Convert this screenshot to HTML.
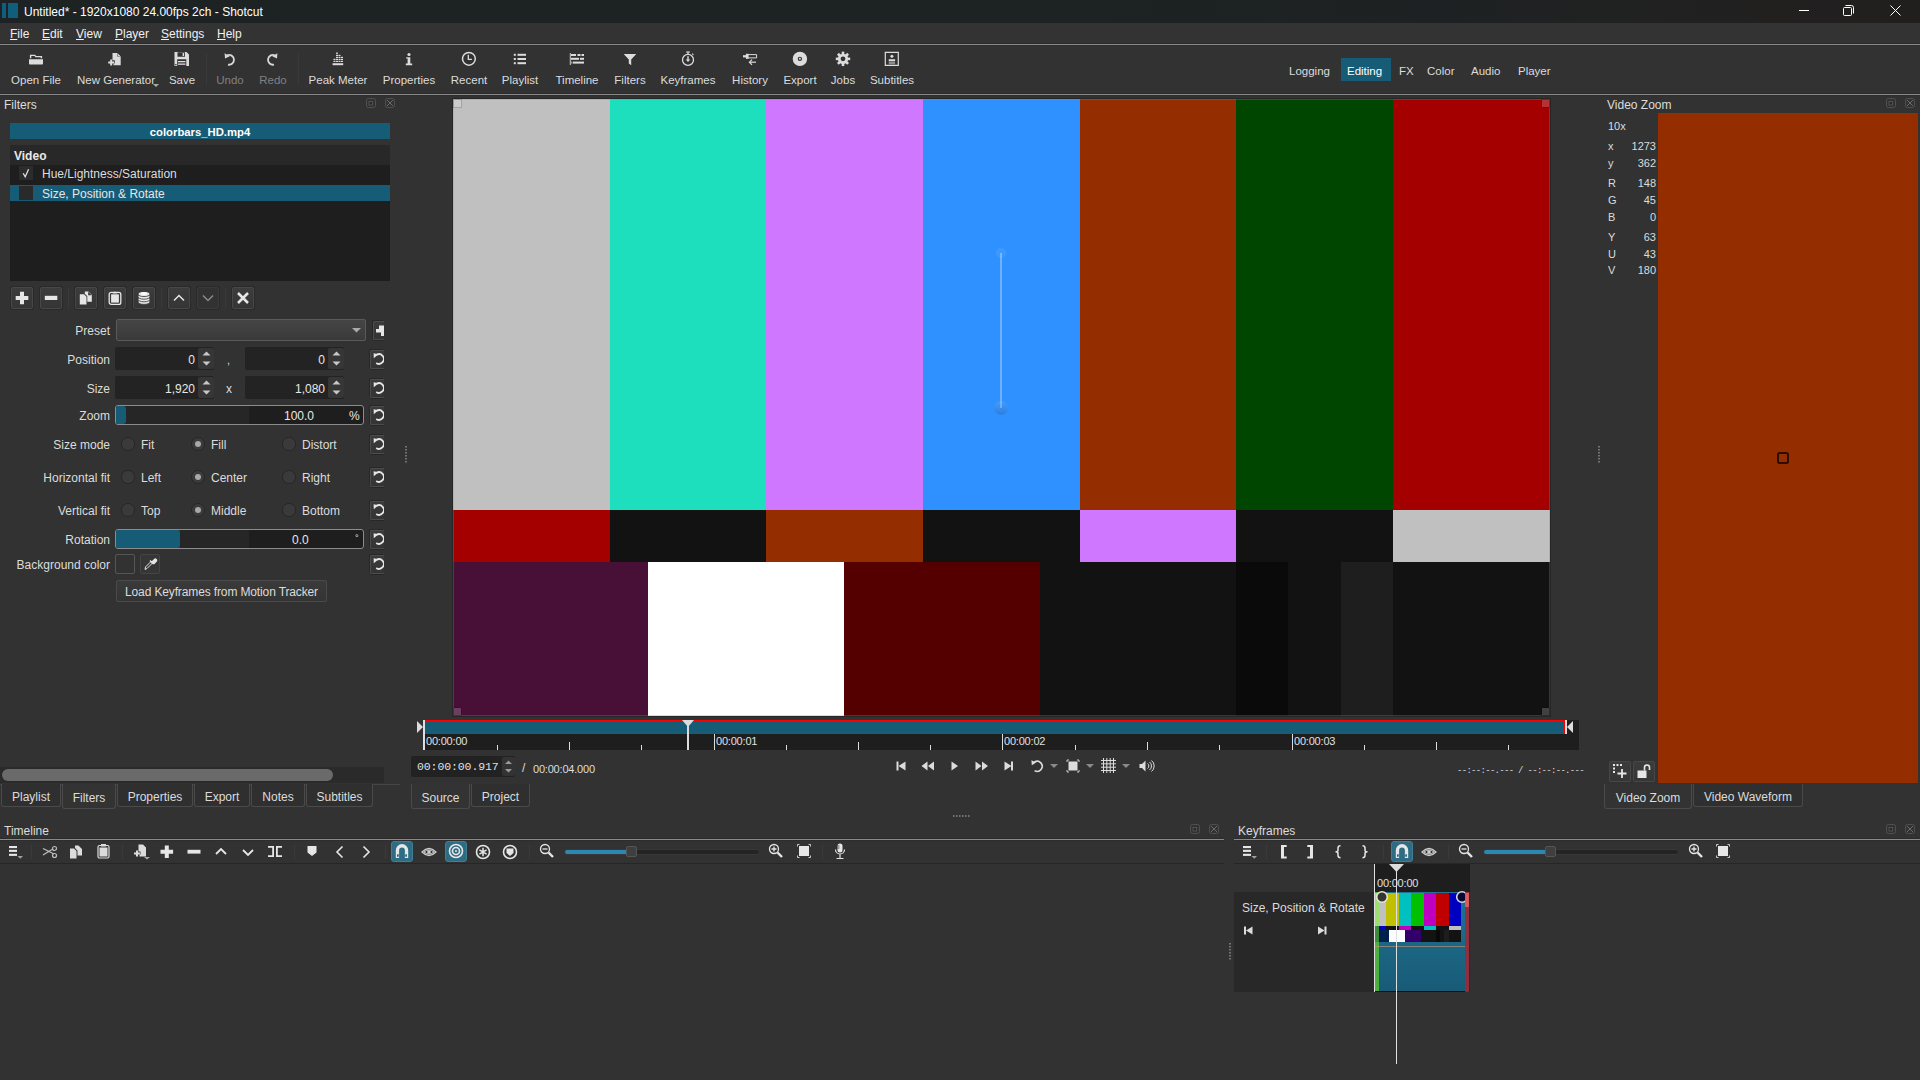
<!DOCTYPE html>
<html><head><meta charset="utf-8">
<style>
*{box-sizing:border-box}
html,body{margin:0;padding:0}
body{width:1920px;height:1080px;overflow:hidden;position:relative;background:#323232;font-family:"Liberation Sans",sans-serif;font-size:12px;color:#dcdcdc}
.a{position:absolute}
.t{position:absolute;white-space:pre;line-height:14px}
svg{position:absolute;overflow:visible}
.sep{position:absolute;width:1px;background:#444}
.hl{background:#175c76}
.btn{position:absolute;border:1px solid #3e3e3e;border-radius:2px;background:linear-gradient(#383838,#323232)}
.rst{position:absolute;border:1px solid #3e3e3e;border-radius:2px;background:#323232}
.spin{position:absolute;background:#262626;border-radius:2px}
.radio{position:absolute;width:14px;height:14px;border-radius:50%;border:1px solid #262626;background:#3a3a3a;box-shadow:inset 0 0 0 1px #3e3e3e}
.tab{position:absolute;border:1px solid #4a4a4a;border-top:none;border-radius:0 0 3px 3px;background:#2f2f2f;text-align:center;line-height:27px}
.fbtn{position:absolute;top:287px;width:22px;height:22px;border:1px solid #474747;border-radius:2px;background:linear-gradient(#3c3c3c,#353535);box-shadow:0 0 0 1px #2a2a2a}
.spinbox{position:absolute;width:99px;height:23px;background:#232323;border-radius:2px}
.spinbox span{position:absolute;right:19px;top:6px;line-height:14px;color:#e8e8e8}
.spinbox:after{content:"";position:absolute;right:0;top:1px;width:16px;height:21px;background:#363636;border-radius:2px}
.radio i{position:absolute;left:3px;top:3px;width:6px;height:6px;border-radius:50%;background:#a8a8a8}
.rbtn{position:absolute;left:370px;width:14px;height:19px;border:1px solid #4c4c4c;border-right:none;border-radius:2px 0 0 2px;background:linear-gradient(#3b3b3b,#343434);box-shadow:-1px -1px 0 #272727,0 1px 0 #272727}
.zl{position:absolute;left:1608px;width:48px;height:14px;font-size:11px;line-height:14px}
.zl b{position:absolute;left:0;font-weight:normal}
.zl span{position:absolute;right:0}
</style></head><body>

<!-- ===== Title bar ===== -->
<div class="a" style="left:0;top:0;width:1920px;height:23px;background:linear-gradient(90deg,#1e2224 0,#1c2322 300px,#1c2322 1100px,#1e2123 1450px,#212121 1650px,#211f1e 1920px)"></div>
<div class="a" style="left:2px;top:3px;width:4px;height:15px;background:#0f5f7c"></div>
<div class="a" style="left:8px;top:3px;width:10px;height:15px;background:#0f5f7c"></div>
<div class="t" style="left:24px;top:5px;color:#fff">Untitled* - 1920x1080 24.00fps 2ch - Shotcut</div>
<div class="a" style="left:1799px;top:10px;width:10px;height:1px;background:#fff"></div>
<svg style="left:1843px;top:5px" width="12" height="11"><rect x="0.5" y="2.5" width="8" height="8" rx="1" fill="none" stroke="#fff"/><path d="M2.5 0.5h6a2 2 0 0 1 2 2v6" fill="none" stroke="#fff"/></svg>
<svg style="left:1890px;top:5px" width="11" height="11"><path d="M0.5 0.5L10.5 10.5M10.5 0.5L0.5 10.5" stroke="#fff" stroke-width="1"/></svg>

<!-- ===== Menu bar ===== -->
<div class="a" style="left:0;top:23px;width:1920px;height:21px;background:#333"></div>
<div class="t" style="left:10px;top:27px;color:#f0f0f0"><u>F</u>ile</div>
<div class="t" style="left:42px;top:27px;color:#f0f0f0"><u>E</u>dit</div>
<div class="t" style="left:76px;top:27px;color:#f0f0f0"><u>V</u>iew</div>
<div class="t" style="left:115px;top:27px;color:#f0f0f0"><u>P</u>layer</div>
<div class="t" style="left:161px;top:27px;color:#f0f0f0"><u>S</u>ettings</div>
<div class="t" style="left:217px;top:27px;color:#f0f0f0"><u>H</u>elp</div>
<div class="a" style="left:0;top:43px;width:1920px;height:3px;background:linear-gradient(#2b2b2b 0,#2b2b2b 1px,#8a8a8a 1px,#8a8a8a 2px,#2d2d2d 2px)"></div>

<!-- ===== Main toolbar ===== -->
<div class="a" style="left:0;top:46px;width:1920px;height:47px;background:#323232"></div>
<div class="a" style="left:0;top:93px;width:1920px;height:3px;background:linear-gradient(#2b2b2b 0,#2b2b2b 1px,#8a8a8a 1px,#8a8a8a 2px,#2d2d2d 2px)"></div>
<!-- toolbar icons -->
<svg style="left:28px;top:51px" width="16" height="16" fill="#dcdcdc"><path d="M2.6 7.2V4.4h4.2l1 1.2h5.6v1.6" fill="none" stroke="#dcdcdc" stroke-width="1.4"/><path d="M1 8.2h14v4.3a1 1 0 0 1-1 1H2a1 1 0 0 1-1-1z"/></svg>
<svg style="left:107px;top:51px" width="16" height="16" fill="#dcdcdc"><path d="M5.5 2h4.7l3.5 3.5V14.2H6.5V12.5H7.8V9.3H5.5z"/><path d="M10.2 2v3.5h3.5" fill="#323232"/><path d="M10.6 2.3l2.9 2.9h-2.9z"/><path d="M3.2 8.6h2v2h2v2h-2v2h-2v-2h-2v-2h2z"/></svg>
<svg style="left:174px;top:51px" width="16" height="16" fill="#dcdcdc"><path fill-rule="evenodd" d="M0.5 1h12l2.5 2.5V15H0.5z M3.5 1.2h7.5V5.8H3.5z M3.2 8.2h9.1V15H3.2z"/><rect x="8.6" y="2" width="1.5" height="3"/><rect x="4" y="10" width="7.5" height="1.3"/><rect x="4" y="12.5" width="7.5" height="1.3"/><rect x="1.2" y="13" width="1.3" height="1.3" fill="#323232"/></svg>
<svg style="left:222px;top:51px" width="16" height="16"><path d="M5.2 4.3A4.9 4.9 0 1 1 6 13.6" fill="none" stroke="#d8d8d8" stroke-width="1.8"/><path d="M2.6 2.2L3 7.6L7.8 5.2z" fill="#d8d8d8"/></svg>
<svg style="left:264px;top:51px" width="16" height="16"><path d="M10.8 4.3A4.9 4.9 0 1 0 10 13.6" fill="none" stroke="#d8d8d8" stroke-width="1.8"/><path d="M13.4 2.2L13 7.6L8.2 5.2z" fill="#d8d8d8"/></svg>
<svg style="left:330px;top:51px" width="16" height="16" fill="#dcdcdc"><rect x="2.6" y="12.2" width="10.6" height="2"/><g><rect x="3.5" y="9.8" width="2" height="1.2"/><rect x="3.5" y="7.8" width="2" height="1.2"/><rect x="6" y="9.8" width="2" height="1.2"/><rect x="6" y="7.8" width="2" height="1.2"/><rect x="6" y="5.8" width="2" height="1.2"/><rect x="6" y="3.8" width="2" height="1.2"/><rect x="6" y="1.6" width="2" height="1.2"/><rect x="8.5" y="9.8" width="2" height="1.2"/><rect x="8.5" y="7.8" width="2" height="1.2"/><rect x="8.5" y="5.8" width="2" height="1.2"/><rect x="8.5" y="3.8" width="2" height="1.2"/><rect x="11" y="9.8" width="2" height="1.2"/><rect x="11" y="7.8" width="2" height="1.2"/><rect x="11" y="5.8" width="2" height="1.2"/></g></svg>
<svg style="left:401px;top:51px" width="16" height="16" fill="#dcdcdc"><circle cx="8" cy="3.5" r="1.6"/><path d="M5.2 6.2h4.1v6.3h1.9v1.7H4.8v-1.7h1.8V7.6H5.2z"/></svg>
<svg style="left:461px;top:51px" width="16" height="16"><circle cx="7.9" cy="7.8" r="6.4" fill="none" stroke="#dcdcdc" stroke-width="1.5"/><path d="M7.3 3.8v4.5h3.6" fill="none" stroke="#dcdcdc" stroke-width="1.3"/></svg>
<svg style="left:512px;top:51px" width="16" height="16" fill="#dcdcdc"><rect x="1.8" y="2.8" width="2" height="2"/><rect x="1.8" y="7" width="2" height="2"/><rect x="1.8" y="11.2" width="2" height="2"/><rect x="5.5" y="2.8" width="8.5" height="2"/><rect x="5.5" y="7" width="8.5" height="2"/><rect x="5.5" y="11.2" width="8.5" height="2"/></svg>
<svg style="left:569px;top:51px" width="16" height="16" fill="#dcdcdc"><rect x="0.8" y="2" width="0.9" height="12"/><rect x="2" y="3" width="5" height="2"/><rect x="8.5" y="3" width="3" height="2"/><rect x="12.5" y="3" width="2.5" height="2"/><rect x="2" y="6.8" width="8" height="2"/><rect x="11" y="6.8" width="4" height="2"/><rect x="2" y="10.6" width="1.5" height="2" fill="#9a9a9a"/><rect x="4" y="10.6" width="11" height="2"/></svg>
<svg style="left:622px;top:51px" width="16" height="16" fill="#dcdcdc"><path d="M1.7 3h12.6L9.2 8.6V14.2L6.8 12.4V8.6z"/></svg>
<svg style="left:680px;top:51px" width="16" height="16"><circle cx="8" cy="8.9" r="5.5" fill="none" stroke="#dcdcdc" stroke-width="1.3"/><rect x="6.3" y="0.4" width="3.4" height="1.3" fill="#dcdcdc"/><rect x="7.4" y="1.5" width="1.2" height="2" fill="#dcdcdc"/><path d="M12.2 2.6l1.2 1.2" stroke="#dcdcdc" stroke-width="1.2"/><path d="M7.3 5.2h1.4v3.3h1.6L8 11 5.7 8.5h1.6z" fill="#dcdcdc"/></svg>
<svg style="left:742px;top:51px" width="16" height="16" fill="#dcdcdc"><rect x="1" y="4.2" width="3" height="2.2"/><path d="M4.2 3.6h10.4v3.3H4.2z" fill="none" stroke="#dcdcdc" stroke-width="1"/><rect x="4" y="2.8" width="2.6" height="5"/><path d="M8 11.2h6" stroke="#dcdcdc" stroke-width="1.2"/><path d="M10 8.6L7.4 11.2L10 13.8" fill="none" stroke="#dcdcdc" stroke-width="1.2"/></svg>
<svg style="left:792px;top:51px" width="16" height="16"><circle cx="7.9" cy="7.85" r="7.2" fill="#dcdcdc"/><circle cx="7.9" cy="7.85" r="1.6" fill="none" stroke="#323232" stroke-width="1.2"/></svg>
<svg style="left:835px;top:51px" width="16" height="16"><g fill="#dcdcdc" transform="translate(8 7.85)"><circle r="5.2"/><rect x="-1.3" y="-7.2" width="2.6" height="14.4"/><rect x="-1.3" y="-7.2" width="2.6" height="14.4" transform="rotate(45)"/><rect x="-1.3" y="-7.2" width="2.6" height="14.4" transform="rotate(90)"/><rect x="-1.3" y="-7.2" width="2.6" height="14.4" transform="rotate(135)"/><circle r="2.4" fill="#323232"/></g></svg>
<svg style="left:884px;top:51px" width="16" height="16" fill="#dcdcdc"><path d="M1.3 1.3h13v13h-13z" fill="none" stroke="#dcdcdc" stroke-width="1.2"/><circle cx="7.9" cy="5.3" r="1.5"/><path d="M4.7 8.2h6.4v2H4.7z"/><path d="M4.7 10.8h6.4v0.9H4.7zM4.7 12.3h6.4v0.9H4.7z" fill="#aaa"/></svg>
<!-- separators -->
<div class="sep" style="left:206px;top:54px;height:31px;background:#3a3a3a"></div>
<div class="sep" style="left:298px;top:54px;height:31px;background:#3a3a3a"></div>
<!-- toolbar text -->
<div class="t" style="left:-14px;top:73px;width:100px;text-align:center;font-size:11.5px">Open File</div>
<div class="t" style="left:66px;top:73px;width:100px;text-align:center;font-size:11.5px">New Generator</div>
<svg style="left:153px;top:84px" width="6" height="4"><path d="M0 0h6L3 3z" fill="#aaa"/></svg>
<div class="t" style="left:132px;top:73px;width:100px;text-align:center;font-size:11.5px">Save</div>
<div class="t" style="left:180px;top:73px;width:100px;text-align:center;font-size:11.5px;color:#808080">Undo</div>
<div class="t" style="left:223px;top:73px;width:100px;text-align:center;font-size:11.5px;color:#808080">Redo</div>
<div class="t" style="left:288px;top:73px;width:100px;text-align:center;font-size:11.5px">Peak Meter</div>
<div class="t" style="left:359px;top:73px;width:100px;text-align:center;font-size:11.5px">Properties</div>
<div class="t" style="left:419px;top:73px;width:100px;text-align:center;font-size:11.5px">Recent</div>
<div class="t" style="left:470px;top:73px;width:100px;text-align:center;font-size:11.5px">Playlist</div>
<div class="t" style="left:527px;top:73px;width:100px;text-align:center;font-size:11.5px">Timeline</div>
<div class="t" style="left:580px;top:73px;width:100px;text-align:center;font-size:11.5px">Filters</div>
<div class="t" style="left:638px;top:73px;width:100px;text-align:center;font-size:11.5px">Keyframes</div>
<div class="t" style="left:700px;top:73px;width:100px;text-align:center;font-size:11.5px">History</div>
<div class="t" style="left:750px;top:73px;width:100px;text-align:center;font-size:11.5px">Export</div>
<div class="t" style="left:793px;top:73px;width:100px;text-align:center;font-size:11.5px">Jobs</div>
<div class="t" style="left:842px;top:73px;width:100px;text-align:center;font-size:11.5px">Subtitles</div>
<!-- layout switcher -->
<div class="a hl" style="left:1341px;top:58px;width:50px;height:23px"></div>
<div class="t" style="left:1289px;top:64px;font-size:11.5px">Logging</div>
<div class="t" style="left:1347px;top:64px;font-size:11.5px;color:#fff">Editing</div>
<div class="t" style="left:1399px;top:64px;font-size:11.5px">FX</div>
<div class="t" style="left:1427px;top:64px;font-size:11.5px">Color</div>
<div class="t" style="left:1471px;top:64px;font-size:11.5px">Audio</div>
<div class="t" style="left:1518px;top:64px;font-size:11.5px">Player</div>


<!-- dock title -->
<div class="t" style="left:4px;top:98px">Filters</div>
<svg style="left:366px;top:98px" width="10" height="10"><rect x="0.5" y="0.5" width="9" height="9" rx="2" fill="none" stroke="#505050"/><rect x="3" y="3.5" width="3.5" height="3.5" fill="#2a2a2a" stroke="#5a5a5a" stroke-width="0.8"/></svg>
<svg style="left:385px;top:98px" width="10" height="10"><rect x="0.5" y="0.5" width="9" height="9" rx="2" fill="none" stroke="#505050"/><path d="M2 2L8 8M8 2L2 8" stroke="#6a6a6a" stroke-width="1"/></svg>
<!-- clip header -->
<div class="a hl" style="left:10px;top:123px;width:380px;height:16px"></div>
<div class="t" style="left:10px;top:125px;width:380px;text-align:center;font-weight:bold;font-size:11.3px;color:#fff">colorbars_HD.mp4</div>
<!-- list -->
<div class="a" style="left:10px;top:145px;width:380px;height:136px;background:#1e1e1e"></div>
<div class="a" style="left:10px;top:145px;width:380px;height:20px;background:#282828"></div>
<div class="t" style="left:14px;top:149px;font-weight:bold;color:#e8e8e8">Video</div>
<div class="a" style="left:19px;top:166px;width:14px;height:14px;background:#2c2c2c"></div>
<svg style="left:19px;top:166px" width="14" height="14"><path d="M4.2 7.2L6.2 10.8L9.6 3.2" fill="none" stroke="#dcdcdc" stroke-width="1.3"/></svg>
<div class="t" style="left:42px;top:167px">Hue/Lightness/Saturation</div>
<div class="a hl" style="left:10px;top:185px;width:380px;height:16px"></div>
<div class="a" style="left:19px;top:186px;width:14px;height:14px;background:#2a2a2a"></div>
<div class="t" style="left:42px;top:187px;color:#e6e6e6">Size, Position &amp; Rotate</div>
<!-- buttons -->
<div class="fbtn" style="left:11px"></div>
<svg style="left:15px;top:291px" width="14" height="14" fill="#e6e6e6"><path d="M5 0.7h4v4.3h4.3v4H9v4.3H5V9H0.7V5H5z"/></svg>
<div class="fbtn" style="left:40px"></div>
<svg style="left:44px;top:291px" width="14" height="14" fill="#e6e6e6"><rect x="0.8" y="4.8" width="12.5" height="4.2"/></svg>
<div class="sep" style="left:68px;top:288px;height:20px;background:#3a3a3a"></div>
<div class="fbtn" style="left:75px"></div>
<svg style="left:79px;top:291px" width="14" height="14" fill="#e6e6e6"><path d="M0.8 3.2h4.2l2.5 2.5V13.5H0.8z"/><path d="M5.8 0.6h3.6l3.4 3.4V10.8H8.3V5.2L5.8 2.8z"/><path d="M9.2 0.8v3.4h3.4" fill="#323232"/></svg>
<div class="fbtn" style="left:104px"></div>
<svg style="left:108px;top:291px" width="14" height="14"><rect x="1.2" y="1.4" width="11.6" height="12" rx="2" fill="none" stroke="#e6e6e6" stroke-width="1.3"/><rect x="3.1" y="3.3" width="7.8" height="8.3" fill="#e6e6e6"/><path d="M4.5 2.6L7 0.4L9.5 2.6z" fill="#e6e6e6"/></svg>
<div class="fbtn" style="left:133px"></div>
<svg style="left:137px;top:291px" width="14" height="14"><g fill="#e6e6e6" stroke="#323232" stroke-width="0.8"><ellipse cx="7" cy="10.8" rx="6" ry="2.6"/><ellipse cx="7" cy="8.2" rx="6" ry="2.6"/><ellipse cx="7" cy="5.6" rx="6" ry="2.6"/><ellipse cx="7" cy="3" rx="6" ry="2.6"/></g><ellipse cx="7" cy="2.7" rx="3" ry="1.2" fill="#fff"/></svg>
<div class="sep" style="left:161px;top:288px;height:20px;background:#3a3a3a"></div>
<div class="fbtn" style="left:168px"></div>
<svg style="left:172px;top:291px" width="14" height="14"><path d="M2 9.5L7 4.5L12 9.5" fill="none" stroke="#e6e6e6" stroke-width="1.5"/></svg>
<div class="fbtn" style="left:197px;background:#323232;border-color:#3a3a3a"></div>
<svg style="left:201px;top:291px" width="14" height="14"><path d="M2 4.5L7 9.5L12 4.5" fill="none" stroke="#8a8a8a" stroke-width="1.5"/></svg>
<div class="sep" style="left:225px;top:288px;height:20px;background:#3a3a3a"></div>
<div class="fbtn" style="left:232px"></div>
<svg style="left:236px;top:291px" width="14" height="14"><path d="M2 2L12 12M12 2L2 12" stroke="#e6e6e6" stroke-width="2.6"/></svg>
<!-- form labels -->
<div class="t" style="left:0;top:324px;width:110px;text-align:right">Preset</div>
<div class="t" style="left:0;top:353px;width:110px;text-align:right">Position</div>
<div class="t" style="left:0;top:382px;width:110px;text-align:right">Size</div>
<div class="t" style="left:0;top:409px;width:110px;text-align:right">Zoom</div>
<div class="t" style="left:0;top:438px;width:110px;text-align:right">Size mode</div>
<div class="t" style="left:0;top:471px;width:110px;text-align:right">Horizontal fit</div>
<div class="t" style="left:0;top:504px;width:110px;text-align:right">Vertical fit</div>
<div class="t" style="left:0;top:533px;width:110px;text-align:right">Rotation</div>
<div class="t" style="left:0;top:558px;width:110px;text-align:right">Background color</div>
<!-- preset combo -->
<div class="a" style="left:116px;top:319px;width:250px;height:22px;border:1px solid #5a5a5a;border-radius:2px;background:linear-gradient(#454545,#3a3a3a)"></div>
<svg style="left:352px;top:328px" width="9" height="5"><path d="M0 0h9L4.5 4.5z" fill="#aaa"/></svg>
<div class="a" style="left:373px;top:321px;width:11px;height:19px;border:1px solid #4c4c4c;border-right:none;border-radius:2px 0 0 2px;background:linear-gradient(#3b3b3b,#343434);box-shadow:-1px -1px 0 #272727,0 1px 0 #272727"></div>
<svg style="left:376px;top:324px" width="8" height="12" fill="#e6e6e6"><path d="M0 5h3V1.5h5V12H5V8.5H0z"/></svg>
<!-- spinboxes -->
<div class="spinbox" style="left:115px;top:347px"><span>0</span></div><svg style="left:202px;top:351px" width="9" height="15"><path d="M0.5 4.5L4.5 0.5L8.5 4.5z M0.5 10.5L4.5 14.5L8.5 10.5z" fill="#c8c8c8"/></svg>
<div class="spinbox" style="left:245px;top:347px"><span>0</span></div><svg style="left:332px;top:351px" width="9" height="15"><path d="M0.5 4.5L4.5 0.5L8.5 4.5z M0.5 10.5L4.5 14.5L8.5 10.5z" fill="#c8c8c8"/></svg>
<div class="t" style="left:227px;top:353px;font-size:11px">,</div>
<div class="spinbox" style="left:115px;top:376px"><span>1,920</span></div><svg style="left:202px;top:380px" width="9" height="15"><path d="M0.5 4.5L4.5 0.5L8.5 4.5z M0.5 10.5L4.5 14.5L8.5 10.5z" fill="#c8c8c8"/></svg>
<div class="spinbox" style="left:245px;top:376px"><span>1,080</span></div><svg style="left:332px;top:380px" width="9" height="15"><path d="M0.5 4.5L4.5 0.5L8.5 4.5z M0.5 10.5L4.5 14.5L8.5 10.5z" fill="#c8c8c8"/></svg>
<div class="t" style="left:226px;top:382px">x</div>
<!-- zoom slider -->
<div class="a" style="left:115px;top:405px;width:249px;height:20px;border:1px solid #8c8c8c;border-radius:3px;background:linear-gradient(90deg,#262626 0,#262626 133px,#1e1e1e 133px)"></div>
<div class="a hl" style="left:116px;top:406px;width:10px;height:18px;border-radius:2px 3px 3px 2px"></div>
<div class="t" style="left:284px;top:409px;color:#e8e8e8">100.0</div>
<div class="t" style="left:349px;top:409px;color:#e8e8e8">%</div>
<!-- radios -->
<div class="radio" style="left:121px;top:437px"></div><div class="t" style="left:141px;top:438px">Fit</div>
<div class="radio" style="left:191px;top:437px"><i></i></div><div class="t" style="left:211px;top:438px">Fill</div>
<div class="radio" style="left:282px;top:437px"></div><div class="t" style="left:302px;top:438px">Distort</div>
<div class="radio" style="left:121px;top:470px"></div><div class="t" style="left:141px;top:471px">Left</div>
<div class="radio" style="left:191px;top:470px"><i></i></div><div class="t" style="left:211px;top:471px">Center</div>
<div class="radio" style="left:282px;top:470px"></div><div class="t" style="left:302px;top:471px">Right</div>
<div class="radio" style="left:121px;top:503px"></div><div class="t" style="left:141px;top:504px">Top</div>
<div class="radio" style="left:191px;top:503px"><i></i></div><div class="t" style="left:211px;top:504px">Middle</div>
<div class="radio" style="left:282px;top:503px"></div><div class="t" style="left:302px;top:504px">Bottom</div>
<!-- rotation slider -->
<div class="a" style="left:115px;top:529px;width:249px;height:20px;border:1px solid #8c8c8c;border-radius:3px;background:linear-gradient(90deg,#262626 0,#262626 133px,#1e1e1e 133px)"></div>
<div class="a hl" style="left:116px;top:530px;width:64px;height:18px;border-radius:2px"></div>
<div class="t" style="left:292px;top:533px;color:#e8e8e8">0.0</div>
<div class="t" style="left:355px;top:531px;font-size:9px;color:#e8e8e8">°</div>
<!-- background color -->
<div class="a" style="left:115px;top:554px;width:20px;height:20px;border:1px solid #555;border-radius:2px;background:#323232"></div>
<div class="a" style="left:140px;top:554px;width:20px;height:20px;border:1px solid #444;border-radius:2px;background:#363636"></div>
<svg style="left:143px;top:557px" width="14" height="14"><path d="M2 12.5L2.5 10L8 4.5L9.5 6L4 11.5z" fill="none" stroke="#e6e6e6" stroke-width="1"/><path d="M7 3.5L10.5 7M9 5L11.5 2.5a1.2 1.2 0 0 1 1.7 1.7L10.5 7" fill="#e6e6e6" stroke="#e6e6e6" stroke-width="1.4"/></svg>
<!-- load keyframes button -->
<div class="a" style="left:116px;top:580px;width:211px;height:22px;border:1px solid #4a4a4a;border-radius:2px;background:linear-gradient(#3a3a3a,#343434)"></div>
<div class="t" style="left:116px;top:585px;width:211px;text-align:center;letter-spacing:-0.13px">Load Keyframes from Motion Tracker</div>
<!-- reset buttons -->
<div class="rbtn" style="top:350px"></div><svg style="left:373px;top:352px;overflow:hidden" width="11" height="14"><path d="M3.25 3.07A4.8 4.8 0 1 1 3.25 10.93" fill="none" stroke="#e6e6e6" stroke-width="1.8"/><path d="M0.6 1.2L0.8 6.2L5.4 2.2z" fill="#e6e6e6"/></svg>
<div class="rbtn" style="top:379px"></div><svg style="left:373px;top:381px;overflow:hidden" width="11" height="14"><path d="M3.25 3.07A4.8 4.8 0 1 1 3.25 10.93" fill="none" stroke="#e6e6e6" stroke-width="1.8"/><path d="M0.6 1.2L0.8 6.2L5.4 2.2z" fill="#e6e6e6"/></svg>
<div class="rbtn" style="top:406px"></div><svg style="left:373px;top:408px;overflow:hidden" width="11" height="14"><path d="M3.25 3.07A4.8 4.8 0 1 1 3.25 10.93" fill="none" stroke="#e6e6e6" stroke-width="1.8"/><path d="M0.6 1.2L0.8 6.2L5.4 2.2z" fill="#e6e6e6"/></svg>
<div class="rbtn" style="top:435px"></div><svg style="left:373px;top:437px;overflow:hidden" width="11" height="14"><path d="M3.25 3.07A4.8 4.8 0 1 1 3.25 10.93" fill="none" stroke="#e6e6e6" stroke-width="1.8"/><path d="M0.6 1.2L0.8 6.2L5.4 2.2z" fill="#e6e6e6"/></svg>
<div class="rbtn" style="top:468px"></div><svg style="left:373px;top:470px;overflow:hidden" width="11" height="14"><path d="M3.25 3.07A4.8 4.8 0 1 1 3.25 10.93" fill="none" stroke="#e6e6e6" stroke-width="1.8"/><path d="M0.6 1.2L0.8 6.2L5.4 2.2z" fill="#e6e6e6"/></svg>
<div class="rbtn" style="top:501px"></div><svg style="left:373px;top:503px;overflow:hidden" width="11" height="14"><path d="M3.25 3.07A4.8 4.8 0 1 1 3.25 10.93" fill="none" stroke="#e6e6e6" stroke-width="1.8"/><path d="M0.6 1.2L0.8 6.2L5.4 2.2z" fill="#e6e6e6"/></svg>
<div class="rbtn" style="top:530px"></div><svg style="left:373px;top:532px;overflow:hidden" width="11" height="14"><path d="M3.25 3.07A4.8 4.8 0 1 1 3.25 10.93" fill="none" stroke="#e6e6e6" stroke-width="1.8"/><path d="M0.6 1.2L0.8 6.2L5.4 2.2z" fill="#e6e6e6"/></svg>
<div class="rbtn" style="top:555px"></div><svg style="left:373px;top:557px;overflow:hidden" width="11" height="14"><path d="M3.25 3.07A4.8 4.8 0 1 1 3.25 10.93" fill="none" stroke="#e6e6e6" stroke-width="1.8"/><path d="M0.6 1.2L0.8 6.2L5.4 2.2z" fill="#e6e6e6"/></svg>
<!-- scrollbar -->
<div class="a" style="left:0;top:767px;width:384px;height:16px;background:#2a2a2a"></div>
<div class="a" style="left:2px;top:769px;width:331px;height:12px;border-radius:6px;background:#6a6a6a"></div>
<!-- tabs -->
<div class="a" style="left:0;top:784px;width:400px;height:1px;background:#454545"></div>
<div class="tab" style="left:1px;top:784px;width:60px;height:23px">Playlist</div>
<div class="tab" style="left:62px;top:784px;width:54px;height:25px;line-height:28px;background:#333">Filters</div>
<div class="tab" style="left:117px;top:784px;width:76px;height:23px">Properties</div>
<div class="tab" style="left:194px;top:784px;width:56px;height:23px">Export</div>
<div class="tab" style="left:251px;top:784px;width:54px;height:23px">Notes</div>
<div class="tab" style="left:306px;top:784px;width:67px;height:23px">Subtitles</div>


<!-- video frame -->
<div class="a" style="left:452px;top:98px;width:1099px;height:619px;background:#262626"></div>
<div class="a" style="left:453px;top:99px;width:1097px;height:617px;overflow:hidden">
 <div class="a" style="left:0;top:0;width:157px;height:411px;background:#c0c0c0"></div>
 <div class="a" style="left:157px;top:0;width:156px;height:411px;background:#1ddfbe"></div>
 <div class="a" style="left:313px;top:0;width:157px;height:411px;background:#cf78ff"></div>
 <div class="a" style="left:470px;top:0;width:157px;height:411px;background:#2e91ff"></div>
 <div class="a" style="left:627px;top:0;width:156px;height:411px;background:#942d00"></div>
 <div class="a" style="left:783px;top:0;width:157px;height:411px;background:#004500"></div>
 <div class="a" style="left:940px;top:0;width:157px;height:411px;background:#a50000"></div>
 <div class="a" style="left:0;top:411px;width:157px;height:52px;background:#a50000"></div>
 <div class="a" style="left:157px;top:411px;width:156px;height:52px;background:#121212"></div>
 <div class="a" style="left:313px;top:411px;width:157px;height:52px;background:#942d00"></div>
 <div class="a" style="left:470px;top:411px;width:157px;height:52px;background:#121212"></div>
 <div class="a" style="left:627px;top:411px;width:156px;height:52px;background:#cf78ff"></div>
 <div class="a" style="left:783px;top:411px;width:157px;height:52px;background:#121212"></div>
 <div class="a" style="left:940px;top:411px;width:157px;height:52px;background:#c0c0c0"></div>
 <div class="a" style="left:0;top:463px;width:195px;height:154px;background:#480f37"></div>
 <div class="a" style="left:195px;top:463px;width:196px;height:154px;background:#ffffff"></div>
 <div class="a" style="left:391px;top:463px;width:196px;height:154px;background:#540000"></div>
 <div class="a" style="left:587px;top:463px;width:196px;height:154px;background:#121212"></div>
 <div class="a" style="left:783px;top:463px;width:52px;height:154px;background:#0a0a0a"></div>
 <div class="a" style="left:835px;top:463px;width:53px;height:154px;background:#121212"></div>
 <div class="a" style="left:888px;top:463px;width:52px;height:154px;background:#1e1e1e"></div>
 <div class="a" style="left:940px;top:463px;width:157px;height:154px;background:#121212"></div>
 <!-- selection outline -->
 <div class="a" style="left:0;top:0;width:1097px;height:617px;border:1px solid rgba(140,140,140,0.3)"></div>
 <div class="a" style="left:1px;top:1px;width:7px;height:7px;background:rgba(255,255,255,0.2);box-shadow:0 0 0 1px rgba(0,0,0,0.15)"></div>
 <div class="a" style="left:1089px;top:1px;width:7px;height:7px;background:rgba(255,255,255,0.2);box-shadow:0 0 0 1px rgba(0,0,0,0.15)"></div>
 <div class="a" style="left:1px;top:609px;width:7px;height:7px;background:rgba(255,255,255,0.2);box-shadow:0 0 0 1px rgba(0,0,0,0.15)"></div>
 <div class="a" style="left:1089px;top:609px;width:7px;height:7px;background:rgba(255,255,255,0.2);box-shadow:0 0 0 1px rgba(0,0,0,0.15)"></div>
 <!-- rotation handle -->
 <div class="a" style="left:547px;top:154px;width:2px;height:155px;background:rgba(255,255,255,0.3)"></div>
 <div class="a" style="left:543px;top:149px;width:10px;height:10px;border-radius:50%;background:rgba(255,255,255,0.08)"></div>
 <div class="a" style="left:541px;top:302px;width:14px;height:14px;border-radius:50%;background:linear-gradient(rgba(255,255,255,0.1),rgba(0,0,0,0.12))"></div>
</div>
<!-- splitter dots -->
<svg style="left:405px;top:446px" width="2" height="18"><path d="M1 0v18" stroke="#8a8a8a" stroke-width="1.5" stroke-dasharray="1.5 1.5"/></svg>
<!-- scrubber ruler -->
<div class="a" style="left:424px;top:720px;width:1155px;height:30px;background:#1e1e1e"></div>
<div class="a" style="left:424px;top:720px;width:1141px;height:14px;background:#175c76;border:1px solid #ff0000;border-left-width:2px;border-right-width:2px"></div>
<div class="a" style="left:423px;top:720px;width:2px;height:30px;background:#e0e0e0"></div>
<svg style="left:416px;top:720px" width="8" height="14"><path d="M1 1L7 7L1 13z" fill="#dcdcdc"/></svg>
<div class="a" style="left:1565px;top:720px;width:2px;height:14px;background:#e0e0e0"></div>
<svg style="left:1566px;top:720px" width="8" height="14"><path d="M7 1L1 7L7 13z" fill="#dcdcdc"/></svg>
<!-- ticks -->
<div class="a" style="left:424px;top:734px;width:1px;height:16px;background:#dcdcdc"></div>
<div class="t" style="left:426px;top:734px;font-size:11px;letter-spacing:-0.2px;color:#e0e0e0">00:00:00</div>
<div class="a" style="left:497px;top:745px;width:1px;height:5px;background:#dcdcdc"></div>
<div class="a" style="left:569px;top:742px;width:1px;height:8px;background:#dcdcdc"></div>
<div class="a" style="left:641px;top:745px;width:1px;height:5px;background:#dcdcdc"></div>
<div class="a" style="left:714px;top:734px;width:1px;height:16px;background:#dcdcdc"></div>
<div class="t" style="left:716px;top:734px;font-size:11px;letter-spacing:-0.2px;color:#e0e0e0">00:00:01</div>
<div class="a" style="left:786px;top:745px;width:1px;height:5px;background:#dcdcdc"></div>
<div class="a" style="left:858px;top:742px;width:1px;height:8px;background:#dcdcdc"></div>
<div class="a" style="left:930px;top:745px;width:1px;height:5px;background:#dcdcdc"></div>
<div class="a" style="left:1002px;top:734px;width:1px;height:16px;background:#dcdcdc"></div>
<div class="t" style="left:1004px;top:734px;font-size:11px;letter-spacing:-0.2px;color:#e0e0e0">00:00:02</div>
<div class="a" style="left:1075px;top:745px;width:1px;height:5px;background:#dcdcdc"></div>
<div class="a" style="left:1147px;top:742px;width:1px;height:8px;background:#dcdcdc"></div>
<div class="a" style="left:1219px;top:745px;width:1px;height:5px;background:#dcdcdc"></div>
<div class="a" style="left:1292px;top:734px;width:1px;height:16px;background:#dcdcdc"></div>
<div class="t" style="left:1294px;top:734px;font-size:11px;letter-spacing:-0.2px;color:#e0e0e0">00:00:03</div>
<div class="a" style="left:1364px;top:745px;width:1px;height:5px;background:#dcdcdc"></div>
<div class="a" style="left:1436px;top:742px;width:1px;height:8px;background:#dcdcdc"></div>
<div class="a" style="left:1508px;top:745px;width:1px;height:5px;background:#dcdcdc"></div>
<!-- playhead -->
<div class="a" style="left:687px;top:726px;width:2px;height:24px;background:#dcdcdc"></div>
<svg style="left:682px;top:720px" width="12" height="8"><path d="M0 0H12L6 7z" fill="#dcdcdc"/></svg>
<!-- timecode -->
<div class="a" style="left:411px;top:756px;width:104px;height:21px;background:#222;border-radius:2px"></div>
<div class="a" style="left:502px;top:757px;width:13px;height:19px;background:#333;border-radius:2px"></div>
<svg style="left:504px;top:759px" width="9" height="15"><path d="M1 5L4.5 1.5L8 5z M1 10L4.5 13.5L8 10z" fill="#9a9a9a"/></svg>
<div class="t" style="left:417px;top:760px;font-family:'Liberation Mono',monospace;font-size:11.5px;color:#e0e0e0;letter-spacing:-0.1px">00:00:00.917</div>
<div class="t" style="left:522px;top:761px">/</div>
<div class="t" style="left:533px;top:762px;font-size:11px;letter-spacing:-0.2px">00:00:04.000</div>
<!-- transport -->
<svg style="left:896px;top:761px" width="10" height="10" fill="#dcdcdc"><rect x="0.5" y="0.5" width="2" height="9"/><path d="M9.5 0.5v9L2.5 5z"/></svg>
<svg style="left:921px;top:761px" width="14" height="10" fill="#dcdcdc"><path d="M6.5 0.5v9L0.5 5zM13 0.5v9L7 5z"/></svg>
<svg style="left:951px;top:761px" width="8" height="10" fill="#dcdcdc"><path d="M0.5 0.5v9L7 5z"/></svg>
<svg style="left:975px;top:761px" width="14" height="10" fill="#dcdcdc"><path d="M0.5 0.5v9L6.5 5zM7 0.5v9L13 5z"/></svg>
<svg style="left:1004px;top:761px" width="10" height="10" fill="#dcdcdc"><rect x="7" y="0.5" width="2" height="9"/><path d="M0.5 0.5v9L7.5 5z"/></svg>
<svg style="left:1030px;top:759px" width="14" height="14"><path d="M4.3 3.2A5 5 0 1 1 4.6 11.6" fill="none" stroke="#dcdcdc" stroke-width="1.6"/><path d="M1.4 1.2L1.8 6.3L6.2 3.6z" fill="#dcdcdc"/></svg>
<svg style="left:1050px;top:764px" width="9" height="5"><path d="M0 0H8L4 4z" fill="#8a8a8a"/></svg>
<svg style="left:1066px;top:759px" width="14" height="14"><path d="M1 3V1H3M11 1H13V3M13 11V13H11M3 13H1V11" fill="none" stroke="#dcdcdc" stroke-width="0.9"/><rect x="2.5" y="2.5" width="9" height="9" fill="#dcdcdc"/></svg>
<svg style="left:1086px;top:764px" width="9" height="5"><path d="M0 0H8L4 4z" fill="#8a8a8a"/></svg>
<svg style="left:1101px;top:758px" width="15" height="15"><path d="M2.5 0v15M5.8 0v15M9.2 0v15M12.5 0v15M0 2.5h15M0 5.8h15M0 9.2h15M0 12.5h15" stroke="#dcdcdc" stroke-width="1"/></svg>
<svg style="left:1122px;top:764px" width="9" height="5"><path d="M0 0H8L4 4z" fill="#8a8a8a"/></svg>
<svg style="left:1139px;top:759px" width="16" height="14"><path d="M0.5 5h2.5l3.5-3.5v11L3 9H0.5z" fill="#dcdcdc"/><path d="M8.5 4.5a3 3 0 0 1 0 5M10.5 3a5 5 0 0 1 0 8M12.5 1.5a7 7 0 0 1 0 11" fill="none" stroke="#dcdcdc" stroke-width="1"/></svg>
<!-- right timecodes -->
<div class="t" style="left:1457px;top:764px;font-family:'Liberation Mono',monospace;font-size:9px;letter-spacing:-0.7px;color:#dcdcdc">--:--:--.--- / --:--:--.---</div>
<!-- tabs -->
<div class="tab" style="left:411px;top:784px;width:59px;height:25px;line-height:28px;background:#333">Source</div>
<div class="tab" style="left:471px;top:784px;width:59px;height:23px">Project</div>
<!-- horizontal splitter -->
<svg style="left:953px;top:815px" width="18" height="2"><path d="M0 1h18" stroke="#8a8a8a" stroke-width="1.5" stroke-dasharray="1.5 1.5"/></svg>


<!-- video zoom dock -->
<svg style="left:1598px;top:446px" width="2" height="18"><path d="M1 0v18" stroke="#8a8a8a" stroke-width="1.5" stroke-dasharray="1.5 1.5"/></svg>
<div class="t" style="left:1607px;top:98px">Video Zoom</div>
<svg style="left:1886px;top:98px" width="10" height="10"><rect x="0.5" y="0.5" width="9" height="9" rx="2" fill="none" stroke="#505050"/><rect x="3" y="3.5" width="3.5" height="3.5" fill="#2a2a2a" stroke="#5a5a5a" stroke-width="0.8"/></svg>
<svg style="left:1905px;top:98px" width="10" height="10"><rect x="0.5" y="0.5" width="9" height="9" rx="2" fill="none" stroke="#505050"/><path d="M2 2L8 8M8 2L2 8" stroke="#6a6a6a" stroke-width="1"/></svg>
<div class="a" style="left:1658px;top:113px;width:260px;height:670px;background:#942d00"></div>
<svg style="left:1777px;top:452px" width="12" height="12"><rect x="1" y="1" width="10" height="10" rx="1.5" fill="none" stroke="#2c0d00" stroke-width="2"/></svg>
<div class="t" style="left:1608px;top:119px;font-size:11px">10x</div>
<div class="zl" style="top:139px"><b>x</b><span>1273</span></div>
<div class="zl" style="top:156px"><b>y</b><span>362</span></div>
<div class="zl" style="top:176px"><b>R</b><span>148</span></div>
<div class="zl" style="top:193px"><b>G</b><span>45</span></div>
<div class="zl" style="top:210px"><b>B</b><span>0</span></div>
<div class="zl" style="top:230px"><b>Y</b><span>63</span></div>
<div class="zl" style="top:247px"><b>U</b><span>43</span></div>
<div class="zl" style="top:263px"><b>V</b><span>180</span></div>
<!-- zoom dock buttons -->
<div class="a" style="left:1609px;top:761px;width:22px;height:21px;border:1px solid #474747;border-radius:2px;background:linear-gradient(#3c3c3c,#353535)"></div>
<svg style="left:1612px;top:763px" width="16" height="16"><path d="M1 1h2v2H1zM4.5 1h2v2h-2zM8 1h2v2H8zM1 4.5h2v2H1zM1 8h2v2H1z" fill="#e6e6e6"/><path d="M10 6v9M5.5 10.5h9" stroke="#e6e6e6" stroke-width="1.8"/></svg>
<div class="a" style="left:1633px;top:761px;width:22px;height:21px;border:1px solid #474747;border-radius:2px;background:linear-gradient(#3c3c3c,#353535)"></div>
<svg style="left:1636px;top:763px" width="16" height="16"><rect x="1.5" y="7.5" width="9" height="7.5" fill="#e6e6e6"/><path d="M8.5 7.5V4.5a2.5 2.5 0 0 1 5 0V7" fill="none" stroke="#e6e6e6" stroke-width="1.6"/></svg>
<div class="tab" style="left:1604px;top:784px;width:88px;height:25px;line-height:28px;background:#333">Video Zoom</div>
<div class="tab" style="left:1693px;top:784px;width:110px;height:23px">Video Waveform</div>


<!-- timeline dock -->
<div class="t" style="left:4px;top:824px">Timeline</div>
<svg style="left:1190px;top:824px" width="10" height="10"><rect x="0.5" y="0.5" width="9" height="9" rx="2" fill="none" stroke="#505050"/><rect x="3" y="3.5" width="3.5" height="3.5" fill="#2a2a2a" stroke="#5a5a5a" stroke-width="0.8"/></svg>
<svg style="left:1209px;top:824px" width="10" height="10"><rect x="0.5" y="0.5" width="9" height="9" rx="2" fill="none" stroke="#505050"/><path d="M2 2L8 8M8 2L2 8" stroke="#6a6a6a" stroke-width="1"/></svg>
<div class="a" style="left:0px;top:838px;width:1224px;height:3px;background:linear-gradient(#2b2b2b 0,#2b2b2b 1px,#8a8a8a 1px,#8a8a8a 2px,#2d2d2d 2px)"></div>
<div class="a" style="left:0;top:863px;width:1224px;height:1px;background:#262626"></div>
<!-- timeline toolbar icons -->
<svg style="left:8px;top:844px" width="18" height="16" fill="#e6e6e6"><rect x="1" y="2" width="8" height="2.1"/><rect x="1" y="5.8" width="8" height="2.1"/><rect x="1" y="9.8" width="8" height="2.1"/><path d="M9.5 12h5.5l-2.75 2.8z" fill="#a0a0a0"/></svg>
<div class="sep" style="left:31px;top:845px;height:14px;background:#3a3a3a"></div>
<svg style="left:42px;top:844px" width="16" height="16"><path d="M1 4.5L12 10M1 11L10 5.5" stroke="#bdbdbd" stroke-width="1.2"/><circle cx="12.5" cy="4.5" r="2" fill="none" stroke="#bdbdbd" stroke-width="1.2"/><circle cx="12.5" cy="11.5" r="2" fill="none" stroke="#bdbdbd" stroke-width="1.2"/></svg>
<svg style="left:69px;top:844px" width="16" height="16" fill="#dcdcdc"><path d="M1 4.5h4l2.5 2.5V14.5H1z"/><path d="M6 1.5h3.5l3.5 3.5V11.5H8.5V6.5L6 4z"/></svg>
<svg style="left:96px;top:843px" width="16" height="16"><rect x="2" y="2.5" width="11" height="12.5" rx="1.5" fill="none" stroke="#dcdcdc" stroke-width="1.2"/><rect x="3.5" y="4.5" width="8" height="9" fill="#dcdcdc"/><rect x="5" y="1" width="5" height="2.5" fill="#dcdcdc"/></svg>
<div class="sep" style="left:122px;top:845px;height:14px;background:#3a3a3a"></div>
<svg style="left:133px;top:843px" width="18" height="18" fill="#dcdcdc"><path d="M5.5 1.5h4.5l3 3V13.5H6.5V11.5H7.5V8.5H5.5z"/><path d="M3 7.5h2v2h2v2H5v2H3v-2H1v-2h2z"/><path d="M11 14h6l-3 2.5z" fill="#aaa"/></svg>
<svg style="left:160px;top:845px" width="14" height="14" fill="#e6e6e6"><path d="M4.8 0.5h4v4.3h4.3v4H8.8v4.3h-4V8.8H0.5v-4h4.3z"/></svg>
<svg style="left:187px;top:845px" width="14" height="14" fill="#e6e6e6"><rect x="0.5" y="4.8" width="13" height="3.8"/></svg>
<svg style="left:214px;top:845px" width="14" height="14"><path d="M2 9L7 4L12 9" fill="none" stroke="#e6e6e6" stroke-width="1.8"/></svg>
<svg style="left:241px;top:845px" width="14" height="14"><path d="M2 5L7 10L12 5" fill="none" stroke="#e6e6e6" stroke-width="1.8"/></svg>
<svg style="left:268px;top:846px" width="14" height="11" fill="#e6e6e6"><path d="M0 0h6v11H0V9.3h4.2V1.7H0z"/><path d="M14 0H8v11h6V9.3H9.8V1.7H14z"/></svg>
<div class="sep" style="left:294px;top:845px;height:14px;background:#3a3a3a"></div>
<svg style="left:306px;top:845px" width="12" height="12" fill="#e6e6e6"><path d="M1.5 1h9v6.5L6 11L1.5 7.5z"/></svg>
<svg style="left:334px;top:845px" width="12" height="14"><path d="M8.5 1.5L3 7l5.5 5.5" fill="none" stroke="#e6e6e6" stroke-width="1.6"/></svg>
<svg style="left:360px;top:845px" width="12" height="14"><path d="M3.5 1.5L9 7l-5.5 5.5" fill="none" stroke="#e6e6e6" stroke-width="1.6"/></svg>
<div class="sep" style="left:385px;top:845px;height:14px;background:#3a3a3a"></div>
<div class="a" style="left:391px;top:841px;width:22px;height:21px;border:1px solid #3f7f96;border-radius:3px;background:#2e6c84"></div>
<svg style="left:394px;top:842px" width="16" height="17"><path d="M1.8 16V8.3A6.2 6.2 0 0 1 14.2 8.3V16H10.9V8.3A2.9 2.9 0 0 0 5.1 8.3V16z" fill="#e6e6e6"/><rect x="3" y="12.3" width="1.8" height="2.4" fill="#2e6c84"/><rect x="11.2" y="12.3" width="1.8" height="2.4" fill="#2e6c84"/></svg>
<svg style="left:421px;top:845px" width="16" height="14"><path d="M1 7Q8 0 15 7Q8 14 1 7z" fill="none" stroke="#cfcfcf" stroke-width="1.2"/><path d="M3 7Q8 3 13 7Q8 11 3 7z" fill="none" stroke="#cfcfcf" stroke-width="1"/><circle cx="8" cy="7" r="1.8" fill="#cfcfcf"/></svg>
<div class="a" style="left:445px;top:841px;width:22px;height:21px;border:1px solid #3f7f96;border-radius:3px;background:#2e6c84"></div>
<svg style="left:448px;top:843px" width="16" height="16"><circle cx="8" cy="8" r="6.5" fill="none" stroke="#e8e8e8" stroke-width="1.6"/><circle cx="8" cy="8" r="3.5" fill="none" stroke="#e8e8e8" stroke-width="1.6"/><circle cx="8" cy="8" r="1" fill="#e8e8e8"/></svg>
<svg style="left:475px;top:844px" width="16" height="16"><circle cx="8" cy="8" r="6.5" fill="none" stroke="#e6e6e6" stroke-width="1.6"/><path d="M8 3.8v8.4M4.4 5.9l7.2 4.2M4.4 10.1l7.2-4.2" stroke="#e6e6e6" stroke-width="1.5"/></svg>
<svg style="left:502px;top:844px" width="16" height="16"><circle cx="8" cy="8" r="6.5" fill="none" stroke="#e6e6e6" stroke-width="1.6"/><path d="M4.5 4.5h7v4.5L8 12L4.5 9z" fill="#e6e6e6"/></svg>
<div class="sep" style="left:529px;top:845px;height:14px;background:#3a3a3a"></div>
<svg style="left:539px;top:843px" width="16" height="16"><circle cx="6" cy="6" r="4.5" fill="none" stroke="#e6e6e6" stroke-width="1.3"/><path d="M3.5 6h5" stroke="#e6e6e6" stroke-width="1.3"/><path d="M9.5 9.5L14 14" stroke="#e6e6e6" stroke-width="2.4"/></svg>
<div class="a" style="left:564px;top:849px;width:196px;height:6px;border-radius:3px;background:#242424;border:1px solid #383838"></div>
<div class="a" style="left:565px;top:850px;width:63px;height:4px;border-radius:2px;background:#2a88b2"></div>
<div class="a" style="left:626px;top:846px;width:11px;height:11px;border-radius:2px;background:#3f3f3f;border:1px solid #555"></div>
<svg style="left:768px;top:843px" width="16" height="16"><circle cx="6" cy="6" r="4.5" fill="none" stroke="#e6e6e6" stroke-width="1.3"/><path d="M3.5 6h5M6 3.5v5" stroke="#e6e6e6" stroke-width="1.3"/><path d="M9.5 9.5L14 14" stroke="#e6e6e6" stroke-width="2.4"/></svg>
<svg style="left:797px;top:844px" width="14" height="14"><path d="M0.5 2.5V0.5H2.5M11.5 0.5H13.5V2.5M13.5 11.5V13.5H11.5M2.5 13.5H0.5V11.5" fill="none" stroke="#dcdcdc" stroke-width="0.9"/><rect x="2" y="2" width="10" height="10" fill="#e6e6e6"/></svg>
<div class="sep" style="left:822px;top:845px;height:14px;background:#3a3a3a"></div>
<svg style="left:834px;top:843px" width="12" height="17"><rect x="3.5" y="0.5" width="5" height="9" rx="2.5" fill="#e6e6e6"/><path d="M1.5 6.5a4.5 4.5 0 0 0 9 0M6 11v4M2.5 15.5h7" fill="none" stroke="#e6e6e6" stroke-width="1.2"/><path d="M3.5 3h2M3.5 5h2" stroke="#323232" stroke-width="0.8"/></svg>


<!-- keyframes dock -->
<svg style="left:1229px;top:943px" width="2" height="18"><path d="M1 0v18" stroke="#8a8a8a" stroke-width="1.5" stroke-dasharray="1.5 1.5"/></svg>
<div class="t" style="left:1238px;top:824px">Keyframes</div>
<svg style="left:1886px;top:824px" width="10" height="10"><rect x="0.5" y="0.5" width="9" height="9" rx="2" fill="none" stroke="#505050"/><rect x="3" y="3.5" width="3.5" height="3.5" fill="#2a2a2a" stroke="#5a5a5a" stroke-width="0.8"/></svg>
<svg style="left:1905px;top:824px" width="10" height="10"><rect x="0.5" y="0.5" width="9" height="9" rx="2" fill="none" stroke="#505050"/><path d="M2 2L8 8M8 2L2 8" stroke="#6a6a6a" stroke-width="1"/></svg>
<div class="a" style="left:1234px;top:838px;width:686px;height:3px;background:linear-gradient(#2b2b2b 0,#2b2b2b 1px,#8a8a8a 1px,#8a8a8a 2px,#2d2d2d 2px)"></div>
<div class="a" style="left:1234px;top:863px;width:686px;height:1px;background:#262626"></div>
<svg style="left:1242px;top:844px" width="18" height="16" fill="#e6e6e6"><rect x="1" y="2" width="8" height="2.1"/><rect x="1" y="5.8" width="8" height="2.1"/><rect x="1" y="9.8" width="8" height="2.1"/><path d="M9.5 12h5.5l-2.75 2.8z" fill="#a0a0a0"/></svg>
<div class="sep" style="left:1266px;top:845px;height:14px;background:#3a3a3a"></div>
<svg style="left:1281px;top:845px" width="7" height="14" fill="#e6e6e6"><path d="M0 0h5.7v2H3v9.6h2.7v2H0z"/></svg>
<svg style="left:1307px;top:845px" width="7" height="14" fill="#e6e6e6"><path d="M6 0H0.3v2H3v9.6H0.3v2H6z"/></svg>
<svg style="left:1334px;top:845px" width="8" height="14"><path d="M6.5 0.8C4.5 0.8 4 1.5 4 3v2.2C4 6.3 3.3 6.8 1.5 6.8C3.3 6.8 4 7.3 4 8.4V10.6C4 12.1 4.5 12.8 6.5 12.8" fill="none" stroke="#e6e6e6" stroke-width="1.5"/></svg>
<svg style="left:1361px;top:845px" width="8" height="14"><path d="M1.5 0.8C3.5 0.8 4 1.5 4 3v2.2C4 6.3 4.7 6.8 6.5 6.8C4.7 6.8 4 7.3 4 8.4V10.6C4 12.1 3.5 12.8 1.5 12.8" fill="none" stroke="#e6e6e6" stroke-width="1.5"/></svg>
<div class="sep" style="left:1383px;top:845px;height:14px;background:#3a3a3a"></div>
<div class="a" style="left:1391px;top:841px;width:22px;height:21px;border:1px solid #3f7f96;border-radius:3px;background:#2e6c84"></div>
<svg style="left:1394px;top:842px" width="16" height="17"><path d="M1.8 16V8.3A6.2 6.2 0 0 1 14.2 8.3V16H10.9V8.3A2.9 2.9 0 0 0 5.1 8.3V16z" fill="#e6e6e6"/><rect x="3" y="12.3" width="1.8" height="2.4" fill="#2e6c84"/><rect x="11.2" y="12.3" width="1.8" height="2.4" fill="#2e6c84"/></svg>
<svg style="left:1421px;top:845px" width="16" height="14"><path d="M1 7Q8 0 15 7Q8 14 1 7z" fill="none" stroke="#cfcfcf" stroke-width="1.2"/><path d="M3 7Q8 3 13 7Q8 11 3 7z" fill="none" stroke="#cfcfcf" stroke-width="1"/><circle cx="8" cy="7" r="1.8" fill="#cfcfcf"/></svg>
<div class="sep" style="left:1448px;top:845px;height:14px;background:#3a3a3a"></div>
<svg style="left:1458px;top:843px" width="16" height="16"><circle cx="6" cy="6" r="4.5" fill="none" stroke="#e6e6e6" stroke-width="1.3"/><path d="M3.5 6h5" stroke="#e6e6e6" stroke-width="1.3"/><path d="M9.5 9.5L14 14" stroke="#e6e6e6" stroke-width="2.4"/></svg>
<div class="a" style="left:1483px;top:849px;width:196px;height:6px;border-radius:3px;background:#242424;border:1px solid #383838"></div>
<div class="a" style="left:1484px;top:850px;width:63px;height:4px;border-radius:2px;background:#2a88b2"></div>
<div class="a" style="left:1545px;top:846px;width:11px;height:11px;border-radius:2px;background:#3f3f3f;border:1px solid #555"></div>
<svg style="left:1688px;top:843px" width="16" height="16"><circle cx="6" cy="6" r="4.5" fill="none" stroke="#e6e6e6" stroke-width="1.3"/><path d="M3.5 6h5M6 3.5v5" stroke="#e6e6e6" stroke-width="1.3"/><path d="M9.5 9.5L14 14" stroke="#e6e6e6" stroke-width="2.4"/></svg>
<svg style="left:1716px;top:844px" width="14" height="14"><path d="M0.5 2.5V0.5H2.5M11.5 0.5H13.5V2.5M13.5 11.5V13.5H11.5M2.5 13.5H0.5V11.5" fill="none" stroke="#dcdcdc" stroke-width="0.9"/><rect x="2" y="2" width="10" height="10" fill="#e6e6e6"/></svg>
<!-- keyframe ruler -->
<div class="a" style="left:1374px;top:864px;width:96px;height:28px;background:#1e1e1e"></div>
<div class="a" style="left:1374px;top:864px;width:1px;height:128px;background:#dcdcdc"></div>
<div class="t" style="left:1377px;top:876px;font-size:11px;letter-spacing:-0.2px;color:#e0e0e0">00:00:00</div>
<!-- track header -->
<div class="a" style="left:1234px;top:892px;width:140px;height:100px;background:#282828"></div>
<div class="t" style="left:1242px;top:901px">Size, Position &amp; Rotate</div>
<svg style="left:1244px;top:926px" width="9" height="9" fill="#dcdcdc"><rect x="0" y="0.5" width="2" height="8"/><path d="M8.5 0.5v8L2 4.5z"/></svg>
<svg style="left:1318px;top:926px" width="9" height="9" fill="#dcdcdc"><rect x="6.5" y="0.5" width="2" height="8"/><path d="M0 0.5v8L6.5 4.5z"/></svg>
<!-- clip -->
<div class="a" style="left:1374px;top:892px;width:96px;height:100px;background:linear-gradient(#1f7394,#185b76)"></div>
<div class="a" style="left:1379px;top:893px;width:82px;height:49px;overflow:hidden">
 <div class="a" style="left:0;top:0;width:7px;height:33px;background:#c0c0c0"></div>
 <div class="a" style="left:7px;top:0;width:13px;height:33px;background:#c0c000"></div>
 <div class="a" style="left:20px;top:0;width:12px;height:33px;background:#00c0c0"></div>
 <div class="a" style="left:32px;top:0;width:13px;height:33px;background:#00c000"></div>
 <div class="a" style="left:45px;top:0;width:12px;height:33px;background:#c000c0"></div>
 <div class="a" style="left:57px;top:0;width:13px;height:33px;background:#c00000"></div>
 <div class="a" style="left:70px;top:0;width:12px;height:33px;background:#0000c0"></div>
 <div class="a" style="left:0;top:33px;width:82px;height:4px;background:#131313"></div>
 <div class="a" style="left:0;top:33px;width:7px;height:4px;background:#0000c0"></div>
 <div class="a" style="left:20px;top:33px;width:12px;height:4px;background:#c000c0"></div>
 <div class="a" style="left:45px;top:33px;width:12px;height:4px;background:#00c0c0"></div>
 <div class="a" style="left:70px;top:33px;width:12px;height:4px;background:#c0c0c0"></div>
 <div class="a" style="left:0;top:37px;width:82px;height:12px;background:#131313"></div>
 <div class="a" style="left:0;top:37px;width:10px;height:12px;background:#00214c"></div>
 <div class="a" style="left:10px;top:37px;width:16px;height:12px;background:#ffffff"></div>
 <div class="a" style="left:26px;top:37px;width:16px;height:12px;background:#32006a"></div>
 <div class="a" style="left:57px;top:37px;width:4px;height:12px;background:#090909"></div>
 <div class="a" style="left:65px;top:37px;width:5px;height:12px;background:#1d1d1d"></div>
</div>
<div class="a" style="left:1375px;top:892px;width:4px;height:100px;background:#4cb040"></div>
<div class="a" style="left:1375px;top:893px;width:4px;height:33px;background:#9ede70"></div>
<div class="a" style="left:1375px;top:926px;width:4px;height:16px;background:#3c8a3c"></div>
<div class="a" style="left:1374px;top:946px;width:96px;height:1px;background:rgba(200,150,110,0.6)"></div>
<div class="a" style="left:1374px;top:991px;width:96px;height:1px;background:#101010"></div>
<svg style="left:1375px;top:890px" width="14" height="14"><circle cx="7" cy="7" r="5.3" fill="#353535" stroke="#e8e8d0" stroke-width="1.6"/></svg>
<svg style="left:1455px;top:890px" width="14" height="14"><circle cx="7" cy="7" r="5.3" fill="#0a0a30" stroke="#d8d8f0" stroke-width="1.6"/></svg>
<div class="a" style="left:1465px;top:892px;width:5px;height:100px;background:rgba(160,40,55,0.88)"></div>
<div class="a" style="left:1465px;top:893px;width:5px;height:14px;background:rgba(240,100,100,0.8)"></div>
<div class="a" style="left:1469px;top:892px;width:1px;height:100px;background:#900000"></div>
<div class="a" style="left:1374px;top:864px;width:1px;height:128px;background:#e0e0e0"></div>
<!-- playhead -->
<div class="a" style="left:1396px;top:866px;width:1px;height:198px;background:#e0e0e0"></div>
<svg style="left:1389px;top:864px" width="15" height="9"><path d="M0 0H15L7.5 8z" fill="#dcdcdc"/></svg>


</body></html>
